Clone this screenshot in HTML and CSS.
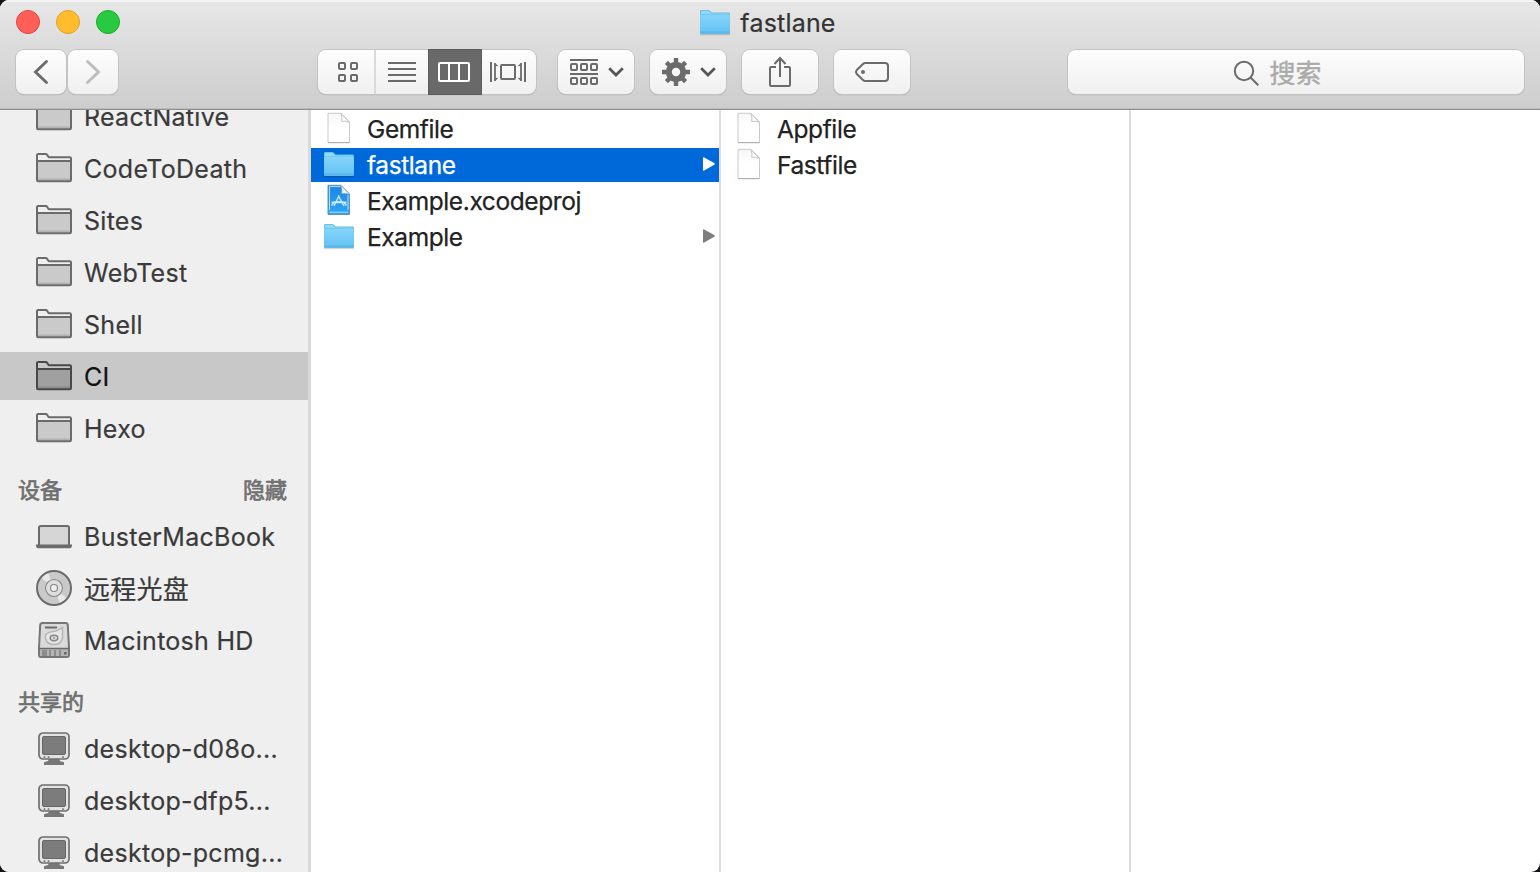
FILE: index.html
```html
<!DOCTYPE html>
<html lang="zh-CN">
<head>
<meta charset="utf-8">
<title>fastlane</title>
<link rel="stylesheet" href="styles.css">
</head>
<body>
<svg class="defs" width="0" height="0" aria-hidden="true">
  <defs>
    <linearGradient id="blue" x1="0" y1="0" x2="0" y2="1"><stop offset="0" stop-color="#86d5fa"/><stop offset="1" stop-color="#66c4f5"/></linearGradient>
    <linearGradient id="xc" x1="0" y1="0" x2="0" y2="1"><stop offset="0" stop-color="#1c86e4"/><stop offset="1" stop-color="#2fa5f5"/></linearGradient>
    <linearGradient id="paper" x1="0" y1="0" x2="0" y2="1"><stop offset="0" stop-color="#f7f7f7"/><stop offset=".5" stop-color="#fff"/></linearGradient>
    <symbol id="side-folder" viewBox="0 0 36 30">
      <path d="M1 8.500h34V27q0 1.200-1.200 1.200H2.200Q1 28.200 1 27z" fill="var(--fill)"/>
      <path d="M2 26.300h32" stroke="var(--line)" stroke-opacity=".25" stroke-width="1.500"/>
      <path d="M1 27V2.200Q1 1 2.200 1h7.300q1.200 0 1.800 1l.9 1.500q.4.700 1.400.7h20.200Q35 4.200 35 5.400V27q0 1.200-1.200 1.200H2.200Q1 28.200 1 27zM1 9.500q0-1.500 1.500-1.500h31q1.500 0 1.500 1.500" fill="none" stroke="var(--line)" stroke-width="2"/>
    </symbol>
    <symbol id="folder" viewBox="0 0 32 28">
      <path d="M1 25.500h30" stroke="#000" stroke-opacity=".16" stroke-width="1.500"/>
      <path d="M1 24V2.200Q1 1 2.200 1h7q1 0 1.700.8l1.200 1.300q.5.500 1.300.5h16.400Q31 3.600 31 4.800V24q0 1-1 1H2q-1 0-1-1z" fill="#62b9e6"/>
      <path d="M1.800 5V2.400q0-.7.700-.7H9q.8 0 1.400.7L11.700 4q.5.500 1.200.5h16.400q.9 0 .9.900z" fill="#8fd9fa"/>
      <path d="M1.200 5.600h29.600v17.200H1.200z" fill="url(#blue)"/>
      <path d="M1 23h30" stroke="#55b4e6" stroke-width=".8"/>
    </symbol>
    <symbol id="file" viewBox="0 0 26 32">
      <path d="M2 1.300h13l8.500 8.700v20.500H2z" fill="url(#paper)" stroke="#c9c9c9" stroke-width="1"/>
      <path d="M2 30.700h21.500" stroke="#aaa" stroke-width="1"/>
      <path d="M15 1.500q1.500 4.500.8 8 3.500-1 7.500.8z" fill="#fff" stroke="#c4c4c4" stroke-width="1"/>
    </symbol>
    <symbol id="xcode" viewBox="0 0 26 32">
      <path d="M2 1.300h13l8.500 8.700v20.500H2z" fill="url(#xc)" stroke="#5d94bd" stroke-width="1"/>
      <path d="M3.500 2.600h11M3.500 2.600v23.400M22 11v15M3.500 28.200h18.500" fill="none" stroke="#c4e8ff" stroke-width=".9"/>
      <path d="M15 1.500q1.500 4.500.8 8 3.500-1 7.500.8z" fill="#f3f9fd" stroke="#9cb4c4" stroke-width=".6"/>
      <path d="M13.200 11.500 8 22M12.200 11.500 18 22M5.500 18.500q7-1.500 15 0M5.500 21.500l2.500-3M20.500 21.500 18 18.500M9.500 18.500h7" fill="none" stroke="#c9ebff" stroke-width="1.400"/>
    </symbol>
    <symbol id="laptop" viewBox="0 0 36 36">
      <rect x="3" y="8" width="30" height="20" rx="1.800" fill="#d6d6d6" stroke="#6b6b6b" stroke-width="2"/>
      <path d="M0 26.500h36V28Q35.500 30.300 34 30.300H2Q.5 30.300 0 28z" fill="#6b6b6b"/>
    </symbol>
    <symbol id="disc" viewBox="0 0 36 36">
      <circle cx="18" cy="18" r="17" fill="#c9c9c9"/>
      <path d="M18 18 5 7.500Q8 4 12 2.400zM18 18l13 10.500q-3 3.500-7 5.100z" fill="#e9e9e9"/>
      <circle cx="18" cy="18" r="17" fill="none" stroke="#6b6b6b" stroke-width="2"/>
      <circle cx="18" cy="18" r="8.500" fill="#dedede" stroke="#8a8a8a" stroke-width="1.100"/>
      <circle cx="18" cy="18" r="3.500" fill="#efefef" stroke="#8a8a8a" stroke-width="1.200"/>
    </symbol>
    <symbol id="drive" viewBox="0 0 36 36">
      <path d="M6.500 1h23Q31.500 1 31.800 3L33 26v7q0 2-2 2H5q-2 0-2-2v-7L4.200 3Q4.500 1 6.500 1z" fill="#dadada" stroke="#767676" stroke-width="2"/>
      <path d="M4 27h28v6q0 1-1 1H5q-1 0-1-1z" fill="#b4b4b4"/>
      <path d="M3 26.500h30" stroke="#6b6b6b" stroke-width="1.500"/>
      <path d="M7 28v6M14 28v6M19 28v6M24 28v6" stroke="#777" stroke-width="1.300"/>
      <path d="M9.500 28v6" stroke="#8c8c8c" stroke-width="3"/>
      <rect x="28" y="30" width="2.500" height="2.500" fill="#666"/>
      <path d="M9 5.500h12" stroke="#6b6b6b" stroke-width="2"/>
      <path d="M26.500 5.500V16q-1.500 6.500-8.500 6.500T9.500 16.500 17 9.500q3.500 0 5-1.500z" fill="#e6e6e6" stroke="#b5b5b5" stroke-width="1.500"/>
      <ellipse cx="18" cy="16" rx="3.800" ry="2.700" fill="#ddd" stroke="#858585" stroke-width="1.500"/><ellipse cx="18" cy="16" rx="1" ry=".7" fill="#777"/>
    </symbol>
    <symbol id="monitor" viewBox="0 0 36 36">
      <path d="M13 29h10l1 2 4 1.200V35H8v-2.800L12 31z" fill="#777"/>
      <rect x="3" y="3" width="30" height="26" rx="4" fill="#e2e2e2" stroke="#6f6f6f" stroke-width="1.700"/>
      <rect x="6.500" y="6.500" width="23" height="18" rx="1.500" fill="#7c7c7c" stroke="#666" stroke-width="1"/>
      <path d="M8.500 26.200v1.800M12.500 26.200v1.800M27 26.200v1.800" stroke="#777" stroke-width="1.600"/>
    </symbol>
    <symbol id="down" viewBox="0 0 16 10"><path d="M1.200 1.300 8 8l6.800-6.700" fill="none" stroke="#555" stroke-width="2.700"/></symbol>
    <symbol id="arrow" viewBox="0 0 12 14"><path d="M0 1Q0-.3 1.200.4l10 5.600q1.300.9 0 1.800l-10 5.800Q0 14.300 0 13z" fill="currentColor"/></symbol>
  </defs>
</svg>

<div class="window">
  <header class="chrome">
    <div class="titlebar">
      <div class="lights"><i class="light red"></i><i class="light amber"></i><i class="light green"></i></div>
      <div class="title"><svg width="32" height="28"><use href="#folder"/></svg><span class="title-text">fastlane</span></div>
    </div>
    <div class="toolbar">
      <div class="nav">
        <div class="button back"><svg width="50" height="44" fill="none" stroke="#6b6b6b" stroke-width="2.900" stroke-linecap="round"><path d="M30.500 11.500 19.500 22l11 10.500"/></svg></div>
        <div class="button forward"><svg width="50" height="44" fill="none" stroke="#bdbdbd" stroke-width="2.900" stroke-linecap="round"><path d="M19.500 11.500 30.500 22l-11 10.500"/></svg></div>
      </div>
      <div class="button views">
        <div class="view grid-view"><svg width="20" height="20" fill="none" stroke="#6b6b6b" stroke-width="2"><rect x="1" y="1" width="6" height="6" rx="1"/><rect x="13" y="1" width="6" height="6" rx="1"/><rect x="1" y="13" width="6" height="6" rx="1"/><rect x="13" y="13" width="6" height="6" rx="1"/></svg></div>
        <div class="view list-view"><svg width="28" height="20" stroke="#6b6b6b" stroke-width="2"><path d="M0 1h28M0 7h28M0 13h28M0 19h28"/></svg></div>
        <div class="view column-view"><svg width="32" height="20" fill="none" stroke="#fff" stroke-width="2"><rect x="1" y="1" width="30" height="18" rx="1"/><path d="M11 1v18M21 1v18"/></svg></div>
        <div class="view cover-view"><svg width="36" height="20" fill="none" stroke="#6b6b6b"><rect x="11" y="3" width="14" height="14" rx="1" stroke-width="2"/><path d="M1 0v20M35 0v20" stroke-width="2"/><path d="M5 1v18M31 1v18" stroke-width="1.800"/><path d="m5 2 2.500 2M5 18l2.500-2M31 2l-2.500 2M31 18l-2.500-2" stroke-width="1.500"/></svg></div>
      </div>
      <div class="tools">
        <div class="button tool menu"><svg width="28" height="26" fill="none" stroke="#6b6b6b" stroke-width="2"><path d="M0 1h28M0 15h28"/><rect x="1" y="5" width="6" height="6" rx="1"/><rect x="11" y="5" width="6" height="6" rx="1"/><rect x="21" y="5" width="6" height="6" rx="1"/><rect x="1" y="19" width="6" height="6" rx="1"/><rect x="11" y="19" width="6" height="6" rx="1"/><rect x="21" y="19" width="6" height="6" rx="1"/></svg><svg width="16" height="10"><use href="#down"/></svg></div>
        <div class="button tool menu"><svg width="28" height="28" viewBox="-14 -14 28 28" stroke="#6b6b6b" fill="none"><circle r="7.200" stroke-width="6"/><path d="M0-14V-8M0 14V8M-14 0h6M14 0H8M-9.600-9.600-6-6M9.600 9.600 6 6M9.600-9.600 6-6M-9.600 9.600-6 6" stroke-width="4.400"/></svg><svg width="16" height="10"><use href="#down"/></svg></div>
        <div class="button tool"><svg width="24" height="32" fill="none" stroke="#6b6b6b" stroke-width="2"><path d="M8 11H3q-1 0-1 1v17q0 1 1 1h18q1 0 1-1V12q0-1-1-1h-5M12 21V2M6.500 8 12 2l5.500 6"/></svg></div>
        <div class="button tool"><svg width="34" height="20" fill="none" stroke="#6b6b6b" stroke-width="2"><path d="M10.500 1H30q3 0 3 3v12q0 3-3 3H10.500Q9 19 8 18L1.800 12q-1.500-2 0-4L8 2q1-1 2.500-1z"/><circle cx="8" cy="10" r="2" fill="#6b6b6b" stroke="none"/></svg></div>
      </div>
      <div class="button search"><svg width="27" height="27" fill="none" stroke="#6b6b6b" stroke-width="2"><circle cx="11" cy="11" r="9.200"/><path d="m17.800 17.800 7.500 7.500"/></svg><span class="placeholder">搜索</span></div>
    </div>
  </header>

  <main class="content">
    <nav class="sidebar">
      <div class="group">
        <div class="place"><svg width="36" height="30"><use href="#side-folder"/></svg><span>ReactNative</span></div>
        <div class="place"><svg width="36" height="30"><use href="#side-folder"/></svg><span>CodeToDeath</span></div>
        <div class="place"><svg width="36" height="30"><use href="#side-folder"/></svg><span>Sites</span></div>
        <div class="place"><svg width="36" height="30"><use href="#side-folder"/></svg><span>WebTest</span></div>
        <div class="place"><svg width="36" height="30"><use href="#side-folder"/></svg><span>Shell</span></div>
        <div class="place current"><svg width="36" height="30"><use href="#side-folder"/></svg><span>CI</span></div>
        <div class="place"><svg width="36" height="30"><use href="#side-folder"/></svg><span>Hexo</span></div>
      </div>
      <div class="heading"><span>设备</span><span>隐藏</span></div>
      <div class="group">
        <div class="place"><svg width="36" height="36"><use href="#laptop"/></svg><span>BusterMacBook</span></div>
        <div class="place"><svg width="36" height="36"><use href="#disc"/></svg><span class="cjk">远程光盘</span></div>
        <div class="place"><svg width="36" height="36"><use href="#drive"/></svg><span>Macintosh HD</span></div>
      </div>
      <div class="heading"><span>共享的</span></div>
      <div class="group">
        <div class="place"><svg width="36" height="36"><use href="#monitor"/></svg><span>desktop-d08o...</span></div>
        <div class="place"><svg width="36" height="36"><use href="#monitor"/></svg><span>desktop-dfp5...</span></div>
        <div class="place"><svg width="36" height="36"><use href="#monitor"/></svg><span>desktop-pcmg...</span></div>
      </div>
    </nav>
    <section class="column">
      <div class="item"><svg class="icon doc" width="26" height="32"><use href="#file"/></svg><span>Gemfile</span></div>
      <div class="item selected"><svg class="icon" width="32" height="28"><use href="#folder"/></svg><span>fastlane</span><svg class="more" width="12" height="14"><use href="#arrow"/></svg></div>
      <div class="item"><svg class="icon doc" width="26" height="32"><use href="#xcode"/></svg><span>Example.xcodeproj</span></div>
      <div class="item"><svg class="icon" width="32" height="28"><use href="#folder"/></svg><span>Example</span><svg class="more" width="12" height="14"><use href="#arrow"/></svg></div>
    </section>
    <section class="column">
      <div class="item"><svg class="icon doc" width="26" height="32"><use href="#file"/></svg><span>Appfile</span></div>
      <div class="item"><svg class="icon doc" width="26" height="32"><use href="#file"/></svg><span>Fastfile</span></div>
    </section>
    <section class="column last"></section>
  </main>
</div>
</body>
</html>
```
FILE: styles.css
```css
* { box-sizing: border-box; }
body {
  margin: 0;
  background: #151517;
  font-family: Inter, "Noto Sans CJK SC", sans-serif;
  font-size: 25px;
  color: #222;
}
svg { display: block; flex: none; }
.defs { position: absolute; }
.window {
  width: 1540px;
  height: 872px;
  display: flex;
  flex-direction: column;
  overflow: hidden;
  border-radius: 9px;
  background: #fff;
}
.chrome {
  height: 110px;
  flex: none;
  background: linear-gradient(#e7e7e7, #cdcdcd);
  border-bottom: 1px solid #8e8e8e;
  box-shadow: inset 0 2px 0 #f3f3f3, inset 0 -1px 0 #bcbcbc;
}
.titlebar {
  height: 50px;
  padding: 0 16px;
  display: grid;
  grid-template-columns: 1fr auto 1fr;
}
.lights { display: flex; gap: 16px; padding-top: 10px; }
.light { width: 24px; height: 24px; border-radius: 50%; border: 1px solid; }
.red { background: #ff5f57; border-color: #e0443e; }
.amber { background: #ffbd2e; border-color: #dea123; }
.green { background: #28ca42; border-color: #1aab29; }
.title {
  height: 46px;
  margin-left: -5px;
  display: flex;
  align-items: center;
  gap: 9px;
  color: #333;
  letter-spacing: .2px;
  -webkit-text-stroke: .2px;
}
.toolbar { display: flex; padding: 0 16px; height: 44px; }
.button {
  height: 44px;
  display: flex;
  align-items: center;
  justify-content: center;
  border-radius: 8px;
  background: linear-gradient(#fdfdfd, #f0f0f0);
  box-shadow: 0 0 0 1px #c3c3c3, 0 1px 1px #9c9c9c;
}
.nav { display: flex; gap: 2px; }
.back, .forward { width: 50px; }
.views { width: 218px; margin-left: 200px; }
.view { height: 44px; display: flex; align-items: center; justify-content: center; }
.grid-view { width: 58px; border-right: 2px solid #dadada; padding-left: 3px; }
.list-view { width: 52px; }
.column-view { width: 54px; height: 46px; padding-right: 2px; background: #696969; border: 1px solid #5c5c5c; }
.cover-view { width: 54px; padding-right: 2px; }
.tools { display: flex; gap: 16px; margin-left: 22px; }
.tool { width: 76px; }
.menu { gap: 10px; padding-left: 1px; }
.search { width: 456px; margin-left: auto; gap: 9px; padding-right: 37px; }
.search svg { margin-top: 2px; }
.placeholder { color: #aaa; font: 26px/40px "Noto Sans CJK SC", sans-serif; -webkit-text-stroke: .4px; }
.content { flex: 1; min-height: 0; display: flex; }
.sidebar {
  width: 311px;
  overflow: hidden;
  background: #efefef;
  border-right: 3px solid #d9d9d9;
  color: #3a3a3a;
  letter-spacing: .28px;
}
.group { display: flex; flex-direction: column; gap: 4px; }
.group:first-child { margin-top: -18px; }
.place {
  --line: #6b6b6b;
  --fill: #cacaca;
  height: 48px;
  padding-left: 36px;
  display: flex;
  align-items: center;
  gap: 12px;
  white-space: nowrap;
  line-height: 46px;
  -webkit-text-stroke: .2px;
}
.place span { padding-top: 2px; }
.current { --line: #484848; --fill: #a0a0a0; background: #c8c8c8; color: #111; }
.place .cjk { padding: 0; font: 26px/44px "Noto Sans CJK SC", sans-serif; }
.heading {
  height: 60px;
  padding: 14px 21px 0 18px;
  display: flex;
  justify-content: space-between;
  font: 22px/44px "Noto Sans CJK SC", sans-serif;
  letter-spacing: 0;
  color: #707070;
  -webkit-text-stroke: .7px;
}
.column {
  width: 410px;
  flex: none;
  padding-top: 2px;
  border-right: 2px solid #dcdcdc;
  display: flex;
  flex-direction: column;
  gap: 2px;
}
.last { width: auto; flex: 1; border: 0; }
.item {
  height: 34px;
  padding: 0 4px 0 12px;
  display: grid;
  grid-template-columns: 32px 1fr auto;
  grid-template-rows: 34px;
  column-gap: 12px;
  align-items: center;
  line-height: 34px;
  font-size: 24.5px;
  letter-spacing: -.4px;
  -webkit-text-stroke: .25px;
}
.icon { justify-self: center; }
.doc { margin-bottom: 2px; }
.more { color: #7d7d7d; margin-bottom: 2px; }
.selected { background: #0069d9; color: #fff; }
.selected .more { color: #fff; }
```
